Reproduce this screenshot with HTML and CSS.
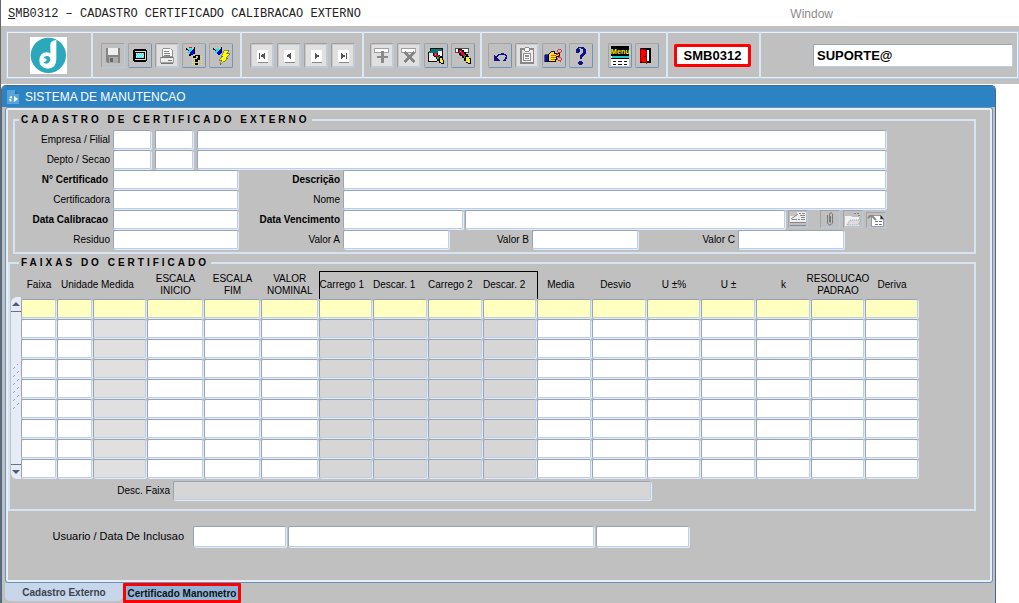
FILE: index.html
```html
<!DOCTYPE html>
<html lang="pt-BR">
<head>
<meta charset="utf-8">
<title>SMB0312 - Cadastro Certificado Calibracao Externo</title>
<link rel="stylesheet" href="styles.css">
</head>
<body>
<header class="menubar">
  <h1 class="menubar-title"><u>S</u>MB0312 – CADASTRO CERTIFICADO CALIBRACAO EXTERNO</h1>
  <a class="menubar-link" href="#window">Window</a>
</header>

<div class="toolbar">
  <div class="tools">
    <div class="group group-logo">
      <svg class="logo" viewBox="0 0 111 111" role="img" aria-label="Logo"><path fill="#fff" d="M0 0h111v111H0z"/><circle cx="55" cy="55" r="53" fill="#2ba9ba"/><path fill="#fff" d="M61 22Q61 11 79 9V66Q79 94 53 95Q28 92 28 70Q29 47 50 46Q57 46 61 50Z"/><path fill="#2ba9ba" d="M40 64Q44 55 54 57Q62 61 61 70Q58 79 49 80Q43 80 40 75Q50 75 50 67Q47 62 40 64Z"/></svg>
    </div>
    <div class="group">
      <button class="tool off" aria-label="Salvar"><svg viewBox="0 0 24 24"><path fill="#858585" d="M4 4h16v16H6l-2-2z"/><path fill="#eee" d="M7 4h10v7H7z"/><path fill="#aaa" d="M8 14h9v6H8z"/><path fill="#666" d="M9 15h3v4H9zM18 5h1v2h-1z"/></svg></button>
      <button class="tool" aria-label="Tela"><svg viewBox="0 0 24 24"><path d="M5 5h14v1h1v12h-1v1H5v-1H4V6h1z"/><path fill="#ddd" d="M6 7h12v10H6z"/><path d="M7 8h10v8H7z"/><path fill="#5ee" d="M8 9h8v6H8z"/><path stroke="#fff" stroke-dasharray="1 1" d="M8 9.500h8M9 11.500h8M8 13.500h8"/></svg></button>
      <button class="tool off pale" aria-label="Imprimir"><svg viewBox="0 0 24 24"><path fill="#fff" stroke="#888" d="M7.500 4.500h8l2 2v7h-10z"/><path stroke="#777" d="M9 7.500h5M9 9.500h6M9 11.500h6"/><path fill="#eee" stroke="#999" d="M4.500 14.500h15v5h-15z"/><path fill="#777" d="M5 14h14v1H5zM13 17h4v1h-4zM5 20h14v1H5z"/></svg></button>
      <button class="tool" aria-label="Entrar consulta"><svg viewBox="0 0 24 24"><path fill="#0ee" d="M6 5l4-1-2 6-3-1z"/><path fill="#00c" d="M7 9l5-5 1 5-4 3z"/><path d="M3 4h1v1h1v1h2v1H5V6H3zM12 3h1v7h-1zM7 10h2v2H7z"/><path fill="#c22" d="M6 3h4v1H6z"/><path stroke="#fe2" stroke-dasharray="1 1" d="M10 13.500h12M10 15.500h12M10 17.500h12M10 19.500h12M10 21.500h12"/><path d="M11 12h2v-1h5v1h1v4h-1v1h-2v2h-3v-3h2v-1h1v-2h-2v2h-3zM13 20h3v2h-3z"/></svg></button>
      <button class="tool" aria-label="Executar consulta"><svg viewBox="0 0 24 24"><path fill="#0ee" d="M6 5l4-1-2 6-3-1z"/><path fill="#00c" d="M7 9l5-5 1 5-4 3z"/><path d="M3 4h1v1h1v1h2v1H5V6H3zM12 3h1v6h-1z"/><path fill="#ff0" stroke="#443" stroke-width=".6" d="M16 6h5l-3 4h4l-5 5h3l-9 7 2-5h-3l4-4h-2z"/></svg></button>
    </div>
    <div class="group">
      <button class="tool off nav" aria-label="Primeiro"><svg viewBox="0 0 24 24"><path fill="#888" d="M8 7h11v13H8z"/><path fill="#fff" d="M7 6h11v13H7z"/><path fill="#555" d="M9 9h1v7H9zM15 9v7l-4-3v-1z"/></svg></button>
      <button class="tool off nav" aria-label="Anterior"><svg viewBox="0 0 24 24"><path fill="#888" d="M8 7h11v13H8z"/><path fill="#fff" d="M7 6h11v13H7z"/><path fill="#555" d="M14 9v7l-4-3v-1z"/></svg></button>
      <button class="tool off nav" aria-label="Proximo"><svg viewBox="0 0 24 24"><path fill="#888" d="M8 7h11v13H8z"/><path fill="#fff" d="M7 6h11v13H7z"/><path fill="#555" d="M11 9v7l4-3v-1z"/></svg></button>
      <button class="tool off nav" aria-label="Ultimo"><svg viewBox="0 0 24 24"><path fill="#888" d="M8 7h11v13H8z"/><path fill="#fff" d="M7 6h11v13H7z"/><path fill="#555" d="M10 9v7l4-3v-1zM15 9h1v7h-1z"/></svg></button>
    </div>
    <div class="group group-short">
      <button class="tool off pale" aria-label="Inserir"><svg viewBox="0 0 24 24"><path fill="#fff" stroke="#999" d="M3.500 4.500h16v4h-16z"/><path fill="#8a8a8a" d="M11 7h3v5h5v3h-5v5h-3v-5H6v-3h5z"/></svg></button>
      <button class="tool off pale" aria-label="Remover"><svg viewBox="0 0 24 24"><path fill="#fff" stroke="#999" d="M3.500 4.500h16v4h-16z"/><path stroke="#858585" stroke-width="3" d="M7 8l11 11M18 8L7 19"/></svg></button>
      <button class="tool" aria-label="Limpar bloco"><svg viewBox="0 0 24 24"><path fill="#fff" stroke="#000" d="M5.500 4.500h14v10h-14z"/><path fill="#077" d="M6 5h13v2H6z"/><path fill="#e8e8e8" stroke="#000" d="M3.500 8.500h10v10h-10z"/><path fill="#077" d="M4 7h10v2H4z"/><path d="M9 9h5v2h2v2h2v2h2v2h1v4h-4v-1h-2v-2h-1v-2h-2v-2h-2v-2H9z"/><path fill="#e04" d="M10 9h3v2h2v2h-1v1h-2v-2h-2z"/><path fill="#f6c" d="M11 10h1v1h-1z"/><path fill="#0c2" d="M15 12h1v2h-1v2h-2v-2h2z"/><path fill="#fe2" d="M16 15h3v2h1v3h-3v-1h-1z"/></svg></button>
      <button class="tool" aria-label="Limpar registro"><svg viewBox="0 0 24 24"><path fill="#fff" stroke="#444" d="M3.500 4.500h15v4h-15z"/><path d="M7 5h4v1h2v2h2v2h2v3h2v2h2v6h-4v-1h-2v-2h-2v-3h-2v-2h-2v-2H8V9H7z"/><path fill="#e04" d="M8 6h3v2h2v2h1v2h-1v1h-1v-2h-2V9H8z"/><path fill="#f6c" d="M9 7h1v1H9z"/><path fill="#0c2" d="M14 11h1v2h-1v2h-1v-2h1z"/><path fill="#fe2" d="M15 14h3v2h2v4h-3v-1h-2z"/></svg></button>
    </div>
    <div class="group group-short">
      <button class="tool" aria-label="Desfazer"><svg viewBox="0 0 24 24"><path fill="none" stroke="#118" stroke-width="1.500" d="M7 15l4-4q7-2 8 2 0 4-3 5"/><path fill="#118" d="M5 11v7h7z"/></svg></button>
      <button class="tool off pale" aria-label="Colar"><svg viewBox="0 0 24 24"><path fill="#eee" stroke="#888" stroke-width="2" d="M5 5h14v15H5z"/><path fill="#fff" stroke="#888" d="M9.500 3.500h5v4h-5zM8.500 9.500h7v8h-7z"/><path stroke="#888" d="M10 11.500h4M10 13.500h4M10 15.500h4"/></svg></button>
      <button class="tool" aria-label="Selecionar"><svg viewBox="0 0 24 24"><path fill="#11b" stroke="#000" stroke-width=".6" d="M2 11h4v8H2z"/><path fill="#fd3" stroke="#000" d="M6 11l3-3h4v2h5v3h-3v3h-1v3H7l-1-1z"/><path stroke="#a70" d="M9 12.500h5M9 14.500h5M9 16.500h4"/><g fill="none" stroke="#e22"><circle cx="18" cy="7" r="2"/><circle cx="18" cy="16" r="2"/><path d="M13 13l4-4M14 10l5 4"/></g></svg></button>
      <button class="tool" aria-label="Ajuda"><svg viewBox="0 0 24 24"><path fill="#118" d="M7 9V5l2-2h6l2 2v5l-3 3-1 3h-2v-4l3-3V5l-4-1 1 3-2 3zM10 18h3v1h1v2h-1v1h-3v-1H9v-2h1z"/></svg></button>
    </div>
    <div class="group">
      <button class="tool" aria-label="Menu"><svg viewBox="0 0 24 24"><path d="M2 2h20v10H2z"/><text class="menu-text" x="2" y="10">Menu</text><path fill="#fff" d="M2 13h20v10H2z"/><path d="M2 12h20v1H2zM2 15h20v1H2z"/><path fill="#2cc" d="M3 13h19v2H3z"/><path stroke="#000" stroke-dasharray="4 2" d="M4 18.500h16M4 21.500h16"/></svg></button>
      <button class="tool" aria-label="Sair"><svg viewBox="0 0 24 24"><path fill="#fff" stroke="#000" stroke-width="2" d="M5 5h10v14H5z"/><path fill="#f00" stroke="#900" d="M4.500 4.500l7 2v14l-7-2z"/><path d="M9 12h2v2H9z"/></svg></button>
    </div>
    <div class="group group-code"><input class="code" aria-label="Codigo do programa" value="SMB0312"></div>
    <div class="group group-user"><input class="user" aria-label="Usuario conectado" value="SUPORTE@"></div>
  </div>
</div>

<main class="window" id="window">
  <h2 class="window-title"><svg class="window-icon" viewBox="0 0 12 16"><path fill="#58a5dc" d="M0 1h8l4 4v10H0z"/><path fill="#2672b0" d="M8 1v4h4z"/><path fill="none" stroke="#fff" stroke-width="2" stroke-dasharray="2 1" d="M5 8a2 2 0 1 0 0 4"/><path fill="#fff" d="M7 7l4 3-4 3z"/></svg>SISTEMA DE MANUTENCAO</h2>

  <form class="panel">
    <fieldset class="box box-form">
      <legend>CADASTRO DE CERTIFICADO EXTERNO</legend>
      <div class="row">
        <label class="lead" for="empresa">Empresa / Filial</label>
        <input class="field w-code" id="empresa"><input class="field w-code" aria-label="Filial"><input class="field grow" aria-label="Nome da filial">
      </div>
      <div class="row">
        <label class="lead" for="depto">Depto / Secao</label>
        <input class="field w-code" id="depto"><input class="field w-code" aria-label="Secao"><input class="field grow" aria-label="Nome da secao">
      </div>
      <div class="row">
        <label class="lead strong" for="numero">N° Certificado</label><input class="field w-main" id="numero">
        <label class="second strong" for="descricao">Descrição</label><input class="field grow" id="descricao">
      </div>
      <div class="row">
        <label class="lead" for="certificadora">Certificadora</label><input class="field w-main" id="certificadora">
        <label class="second" for="nome">Nome</label><input class="field grow" id="nome">
      </div>
      <div class="row">
        <label class="lead strong" for="calibracao">Data Calibracao</label><input class="field w-main" id="calibracao">
        <label class="second strong" for="vencimento">Data Vencimento</label><input class="field w-date" id="vencimento"><input class="field grow" aria-label="Observacao do vencimento">
        <span class="minis">
          <button type="button" class="mini mini-first" aria-label="Lista"><svg viewBox="0 0 18 16"><path fill="#eee" d="M1 1h16v11H1z"/><path fill="#c4c4c4" d="M1 1h7v4H1z"/><path stroke="#888" d="M10 2.500h2M13 2.500h3M11 4.500h5M12 6.500h4M3 8.500h5M9 8.500h2M12 8.500h4M1 11.500h16M1 14.500h16"/><path stroke="#888" d="M9 3L2 8"/></svg></button>
          <button type="button" class="mini" aria-label="Anexo"><svg viewBox="0 0 18 16"><path fill="none" stroke="#777" d="M6.500 4v8q2 4 5 0V3q-2-3-3 0v8q1 1 1 0V5"/></svg></button>
          <button type="button" class="mini" aria-label="Abrir pasta"><svg viewBox="0 0 18 16"><path fill="#f2f2f2" d="M1 5h6l1 1h7v9H1z"/><path fill="#ddd" stroke="#999" stroke-dasharray="1 1" d="M3 14l3-5h11l-3 5z"/><path stroke="#888" stroke-dasharray="2 1" d="M10 2.500h6M14 4.500h2"/></svg></button>
          <button type="button" class="mini mini-low" aria-label="Documento"><svg viewBox="0 0 18 14"><path fill="#fff" stroke="#999" d="M4.500 2.500h9l3 3v8h-12z"/><path stroke="#777" d="M8 8.500h3M12 8.500h3M8 11.500h3M12 11.500h3M13.500 2v4h3"/><path fill="none" stroke="#888" stroke-width="2" d="M1 5l2-2h2l4 4"/></svg></button>
        </span>
      </div>
      <div class="row">
        <label class="lead" for="residuo">Residuo</label><input class="field w-main" id="residuo">
        <label class="second" for="valor-a">Valor A</label><input class="field w-value" id="valor-a">
        <label class="third" for="valor-b">Valor B</label><input class="field w-value" id="valor-b">
        <label class="fourth" for="valor-c">Valor C</label><input class="field w-value" id="valor-c">
      </div>
    </fieldset>

    <fieldset class="box box-grid">
      <legend>FAIXAS DO CERTIFICADO</legend>
      <div class="grid-wrap">
        <div class="scroll">
          <button type="button" class="arrow" aria-label="Subir"><svg viewBox="0 0 8 4"><path d="M0 4l4-4 4 4z"/></svg></button>
          <div class="thumb"><svg class="grip" viewBox="0 0 8 48"><path fill="none" stroke="#8ba3c4" d="M1 5l2-2M5 1l2-2M1 13l2-2M5 9l2-2M1 21l2-2M5 17l2-2M1 29l2-2M5 25l2-2M1 37l2-2M5 33l2-2M1 45l2-2M5 41l2-2"/></svg></div>
          <button type="button" class="arrow" aria-label="Descer"><svg viewBox="0 0 8 4"><path d="M0 0l4 4 4-4z"/></svg></button>
        </div>
        <table class="grid">
          <colgroup>
            <col class="c36"><col class="c36"><col class="c54"><col class="c57"><col class="c57"><col class="c58">
            <col class="c54"><col class="c55"><col class="c55"><col class="c54"><col class="c55"><col class="c55">
            <col class="c54"><col class="c55"><col class="c55"><col class="c54"><col class="c54">
          </colgroup>
          <thead>
            <tr>
              <th scope="col">Faixa</th><th scope="colgroup" colspan="2" class="start">Unidade Medida</th>
              <th scope="col">ESCALA<br>INICIO</th><th scope="col">ESCALA<br>FIM</th><th scope="col">VALOR<br>NOMINAL</th>
              <th scope="col" class="cycle cycle-first">Carrego 1</th><th scope="col" class="cycle">Descar. 1</th><th scope="col" class="cycle">Carrego 2</th><th scope="col" class="cycle cycle-last">Descar. 2</th>
              <th scope="col" class="early">Media</th><th scope="col" class="early">Desvio</th><th scope="col">U ±%</th><th scope="col">U ±</th><th scope="col">k</th>
              <th scope="col"><div class="spill">RESOLUCAO<br>PADRAO</div></th><th scope="col">Deriva</th>
            </tr>
          </thead>
          <tbody id="faixas"></tbody>
        </table>
      </div>
      <div class="row row-desc">
        <label class="desc" for="desc-faixa">Desc. Faixa</label><input class="field shaded w-desc" id="desc-faixa" readonly>
      </div>
    </fieldset>

    <div class="row row-user">
      <label class="author" for="usuario">Usuario / Data De Inclusao</label>
      <input class="field tall w-short" id="usuario"><input class="field tall w-name" aria-label="Nome do usuario"><input class="field tall w-short" aria-label="Data de inclusao">
    </div>
  </form>

  <nav class="tabs">
    <button class="tab">Cadastro Externo</button>
    <button class="tab tab-active">Certificado Manometro</button>
  </nav>
</main>
<script src="app.js"></script>
</body>
</html>
```

FILE: styles.css
```css
* { box-sizing: border-box; }

body {
  margin: 0;
  min-height: 100vh;
  display: flex;
  flex-direction: column;
  border-left: 1px solid #66696e;
  background: #fff;
  color: #000;
  font-family: "Liberation Sans", Arial, sans-serif;
  font-size: 10px;
}

button, input { font-family: inherit; }
h1, h2 { margin: 0; font-weight: normal; }

/* Menu bar */
.menubar {
  display: flex;
  align-items: center;
  height: 26px;
  padding: 2px 186px 0 7px;
}
.menubar-title {
  flex: 1;
  color: #222;
  font-family: "Liberation Mono", "Courier New", monospace;
  font-size: 12px;
}
.menubar-link { color: #8c8c8c; font-size: 12px; text-decoration: none; }

/* Toolbar */
.toolbar { padding: 5px 0 5px 5px; background: #c0c0c0; }
.tools {
  display: flex;
  height: 48px;
  border: 1px solid #b9cde6;
  box-shadow: inset 1px 1px #eaf1f9, inset -1px -1px #eaf1f9;
}
.group {
  display: flex;
  align-items: center;
  gap: 3px;
  padding: 0 7px 0 8px;
  border-right: 2px solid #dce7f4;
}
.group-short { padding: 0 5px 0 6px; }
.group-logo { width: 86px; padding: 0 0 0 23px; }
.group-code { padding: 0 8px 0 6px; }
.group-user { flex: 1; justify-content: flex-end; padding: 0 5px; border-right: 0; }
.logo { width: 37px; height: 37px; }

.tool {
  width: 24px;
  height: 25px;
  padding: 0;
  border: 1px solid;
  border-color: #a4a4a4 #6f94bb #6f94bb #a4a4a4;
  border-radius: 2px;
  background: #c0c0c0;
}
.tool svg { display: block; width: 22px; height: 23px; shape-rendering: crispEdges; }
.off { border-color: #a0a0a0 #b5cbe5 #b5cbe5 #a0a0a0; }
.pale, .nav { background: #e0e0e0; box-shadow: inset 0 0 0 1px #c8c8c8; }
.menu-text { fill: #fe2; font-size: 8px; font-weight: bold; }

.code, .user {
  height: 23px;
  padding: 0 3px;
  border: 1px solid;
  border-color: #9ba6b5 #b9cde6 #b9cde6 #9ba6b5;
  border-radius: 2px;
  background: #fff;
  font-size: 13px;
}
.code {
  width: 77px;
  border: 3px solid #f00;
  font-weight: bold;
  text-align: center;
}
.user { width: 200px; font-weight: bold; }

/* Form window */
.window {
  flex: 1;
  display: flex;
  flex-direction: column;
  margin: 1px 23px 0 0;
  padding: 0 2px 0 3px;
  border: 1px solid #48688d;
  border-width: 1px 1px 0;
  border-radius: 5px 5px 0 0;
  background: #c0c0c0;
}
.window-title {
  display: flex;
  align-items: center;
  gap: 6px;
  height: 21px;
  margin: 0 -2px 0 -3px;
  padding: 1px 0 0 5px;
  border-radius: 4px 4px 0 0;
  background: #2b83c4;
  color: #fff;
  font-size: 12px;
}
.window-icon { width: 12px; height: 16px; }
.panel {
  flex: 1;
  padding: 6px 16px 0 1px;
  border: 1px solid #6c92ba;
  border-radius: 3px;
  box-shadow: inset 0 0 0 2px #e6eef8;
}

.box {
  min-width: 0;
  border: 2px solid #d6e3f2;
}
.box legend {
  height: 12px;
  padding: 0 2px;
  font-size: 10px;
  font-weight: bold;
  line-height: 12px;
  letter-spacing: 3px;
}
.box-form { margin: 0 0 3px 6px; padding: 3px 88px 3px 0; }
.box-form legend { margin-left: 4px; }
.box-grid { margin: 0 0 0 1px; padding: 2px 0 8px 1px; }
.box-grid legend { margin-left: 8px; }

.row { display: flex; align-items: center; height: 20px; }
.row label { flex: none; padding-right: 3px; text-align: right; white-space: nowrap; }
.strong { font-weight: bold; }
.lead { width: 98px; }
.second { width: 105px; }
.third { width: 83px; }
.fourth { width: 100px; }
.row .lead.strong { padding-right: 5px; }

.field {
  display: block;
  min-width: 0;
  height: 19px;
  padding: 0 3px;
  border: 1px solid;
  border-color: #98a4b3 #bbcfe8 #bbcfe8 #98a4b3;
  border-radius: 2px;
  outline: 0;
  background: #fff;
  box-shadow: 1px 1px #e2ebf6;
  font-size: 10px;
}
.row .field { flex: none; }
.row .field.grow { flex: 1; }
.w-code { width: 38px; margin-right: 4px; }
.w-main { width: 125px; }
.w-date { width: 120px; margin-right: 2px; }
.w-value { width: 106px; }
.w-desc { width: 478px; }
.w-short { width: 93px; margin-right: 2px; }
.w-name { width: 306px; margin-right: 2px; }
.shaded { background: #d6d6d6; }
.tall { height: 21px; }

.minis { display: flex; flex: none; gap: 3px; padding-left: 3px; }
.mini {
  width: 20px;
  height: 18px;
  padding: 0;
  border: 1px solid;
  border-color: #a2a2a2 #b7cbe4 #b7cbe4 #a2a2a2;
  background: #c0c0c0;
}
.mini svg { display: block; width: 18px; height: 16px; }
.mini-first { margin-right: 9px; }
.mini-low { height: 16px; align-self: flex-end; }
.mini-low svg { height: 14px; }

/* Range table */
.grid-wrap { display: flex; }
.scroll {
  display: flex;
  flex-direction: column;
  width: 10px;
  margin-top: 26px;
  border-radius: 6px 0 0 6px;
  background: #e6ecf6;
}
.arrow {
  display: flex;
  align-items: center;
  justify-content: center;
  height: 15px;
  padding: 0;
  border: 0;
  border-bottom: 1px solid #65718a;
  background: none;
}
.arrow:last-child { border-top: 1px solid #65718a; border-bottom: 0; }
.arrow svg { width: 8px; height: 4px; fill: #525b73; }
.thumb { flex: 1; display: flex; align-items: center; justify-content: center; }
.grip { width: 8px; height: 48px; }
.grid { table-layout: fixed; width: 898px; border-collapse: collapse; }
.c36 { width: 36px; }
.c54 { width: 54px; }
.c55 { width: 55px; }
.c57 { width: 57px; }
.c58 { width: 58px; }
.grid thead tr { height: 27px; }
.grid th {
  padding: 0;
  font-weight: normal;
  line-height: 12px;
  white-space: nowrap;
}
.grid .start { padding-left: 4px; text-align: left; }
.grid .early { padding-right: 8px; }
.grid .cycle { border-top: 1px solid #000; text-align: left; }
.grid .cycle-first { border-left: 1px solid #000; }
.grid .cycle-last { border-right: 1px solid #000; }
.spill { margin: 0 -6px; }
.grid td { height: 20px; padding: 0 1px 1px 0; }
.grid .field { width: 100%; }
.grid .silver { background: #e0e0e0; }
.grid .current .field { background: #ffffc0; }

.row-desc { margin-top: 2px; }
.desc { width: 162px; }
.row-user { height: 21px; margin-top: 15px; }
.author { width: 186px; font-size: 11px; }
.row .author { padding-right: 9px; }

/* Page tabs */
.tabs { display: flex; height: 20px; }
.tab {
  width: 118px;
  height: 18px;
  padding: 0;
  border: 0;
  border-radius: 0 0 5px 5px;
  background: #c8d6e9;
  color: #3a4350;
  font-size: 10px;
  font-weight: bold;
}
.tab-active {
  height: 20px;
  border: 3px solid #f00;
  border-radius: 1px;
  background: #92b5d7;
  color: #111;
  white-space: nowrap;
}
```

FILE: app.js
```js
const ROWS = 9;
const COLUMNS = [
  "Faixa", "Unidade", "Medida", "Escala inicio", "Escala fim", "Valor nominal",
  "Carrego 1", "Descar. 1", "Carrego 2", "Descar. 2", "Media", "Desvio",
  "U ±%", "U ±", "k", "Resolucao padrao", "Deriva"
];

const body = document.getElementById("faixas");

for (let r = 0; r < ROWS; r++) {
  const row = body.insertRow();
  if (r === 0) row.className = "current";
  COLUMNS.forEach((name, c) => {
    const input = document.createElement("input");
    input.className = "field";
    if (c === 2) input.classList.add("silver");
    if (c >= 6 && c <= 9) input.classList.add("shaded");
    input.setAttribute("aria-label", name + ", linha " + (r + 1));
    row.insertCell().append(input);
  });
}
```
